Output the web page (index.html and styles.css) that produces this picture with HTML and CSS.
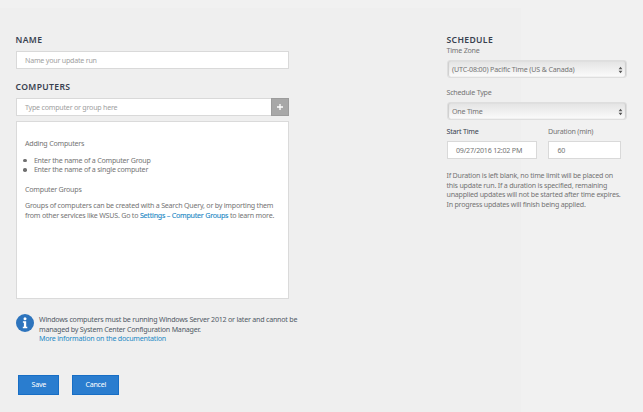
FILE: index.html
```
<!DOCTYPE html>
<html lang="en">
<head>
<meta charset="utf-8">
<title>Update run</title>
<link rel="stylesheet" href="styles.css">
</head>
<body>
<main class="page">
  <section class="main-col">
    <h2 class="heading">NAME</h2>
    <div class="input name-input"><span class="ph">Name your update run</span></div>
    <h2 class="heading computers-heading">COMPUTERS</h2>
    <div class="input-row">
      <div class="input group-input"><span class="ph">Type computer or group here</span></div>
      <button class="add" aria-label="Add"><svg width="8" height="8" viewBox="0 0 8 8"><path d="M4 1v6M1 4h6" stroke="#fff" stroke-width="1.3"/></svg></button>
    </div>
    <div class="panel">
      <p class="sub">Adding Computers</p>
      <ul class="list">
        <li>Enter the name of a Computer Group</li>
        <li>Enter the name of a single computer</li>
      </ul>
      <p class="sub sub-groups">Computer Groups</p>
      <p class="body">Groups of computers can be created with a Search Query, or by importing them<br>from other services like WSUS. Go to <a class="strong-link">Settings – Computer Groups</a> to learn more.</p>
    </div>
    <div class="notice">
      <svg class="info" width="18" height="18" viewBox="0 0 18 18"><circle cx="9" cy="9" r="9" fill="#2d74bd"/><circle cx="9" cy="4.8" r="1.5" fill="#fff"/><path d="M6.9 7.3h3.3v5.4h1.1v1.5H6.8v-1.5h1.1V8.8h-1z" fill="#fff"/></svg>
      <p class="notice-text">Windows computers must be running Windows Server 2012 or later and cannot be<br>managed by System Center Configuration Manager.<br><a>More information on the documentation</a></p>
    </div>
    <div class="actions">
      <button class="btn">Save</button>
      <button class="btn btn-cancel">Cancel</button>
    </div>
  </section>
  <section class="schedule">
    <h2 class="heading">SCHEDULE</h2>
    <p class="label">Time Zone</p>
    <div class="select"><span class="zone">(UTC-08:00) Pacific Time (US &amp; Canada)</span><svg width="5" height="8" viewBox="0 0 5 8"><path d="M2.5 0.7L4.4 3.3H.6zM2.5 7.3L4.4 4.7H.6z" fill="#555"/></svg></div>
    <p class="label type-label">Schedule Type</p>
    <div class="select"><span>One Time</span><svg width="5" height="8" viewBox="0 0 5 8"><path d="M2.5 0.7L4.4 3.3H.6zM2.5 7.3L4.4 4.7H.6z" fill="#555"/></svg></div>
    <div class="time-row">
      <div class="field-start"><p class="label dark">Start Time</p><div class="input"><span>09/27/2016 12:02 PM</span></div></div>
      <div class="field-duration"><p class="label">Duration (min)</p><div class="input"><span>60</span></div></div>
    </div>
    <p class="help">If Duration is left blank, no time limit will be placed on<br>this update run. If a duration is specified, remaining<br>unapplied updates will not be started after time expires.<br>In progress updates will finish being applied.</p>
  </section>
</main>
</body>
</html>
```
FILE: styles.css
```
* { box-sizing: border-box; }
body {
  margin: 0;
  height: 412px;
  overflow: hidden;
  background: linear-gradient(#efefef, #efefef) 0 8px / 521px 404px no-repeat #f1f1f1;
  font: 7.1px/9.5px "Noto Sans", "Open Sans", sans-serif;
  letter-spacing: -0.22px;
  color: #747474;
  white-space: nowrap;
}
p, h2, ul { margin: 0; padding: 0; }
button { padding: 0; border: 0; font: inherit; letter-spacing: inherit; }
a { color: #2489c5; }
.strong-link { -webkit-text-stroke: 0.12px #2489c5; }
.page {
  display: grid;
  grid-template-columns: 273px 180px;
  column-gap: 158px;
  padding: 34px 0 0 15.5px;
}
.heading {
  height: 12px;
  font-size: 8.6px;
  line-height: 12px;
  font-weight: 600;
  letter-spacing: 0.36px;
  color: #384150;
}
.input {
  display: flex;
  align-items: center;
  height: 18px;
  padding: 1px 0 0 8.5px;
  border: 1px solid #d9d9d9;
  background: #fff;
}
.name-input { margin-top: 5px; }
.ph { color: #a0a0a0; }
.computers-heading { margin-top: 12px; }
.input-row { display: flex; margin-top: 5px; }
.group-input { flex: 1; border-right: 0; }
.add {
  display: flex;
  align-items: center;
  justify-content: center;
  width: 18px;
  height: 18px;
  border: 1px solid #9c9c9c;
  background: #a8a8a8;
}
.panel {
  height: 178px;
  margin-top: 5px;
  padding: 17px 0 0 8.5px;
  border: 1px solid #dadada;
  background: #fff;
}
.list { margin-top: 7px; list-style: none; }
.list li { display: flex; align-items: center; height: 9.5px; }
.list li::before {
  content: "";
  width: 3.5px;
  height: 3.5px;
  margin: 0 7.4px 0 -2px;
  border-radius: 50%;
  background: #707070;
}
.sub-groups { margin-top: 10px; }
.body { margin-top: 7px; }
.notice { display: flex; gap: 5.5px; margin-top: 15px; color: #505a66; }
.info { flex: none; }
.notice-text { margin-top: 1px; }
.actions { display: flex; gap: 13px; margin: 31px 0 0 2.8px; }
.btn {
  width: 41px;
  height: 20px;
  border: 1px solid #176ec5;
  background: #2a7dcf;
  color: #fff;
}
.btn-cancel { width: 47px; }
.label { height: 10px; line-height: 9px; }
.select {
  display: flex;
  align-items: center;
  justify-content: space-between;
  height: 18px;
  margin-top: 4px;
  padding: 1px 3px 0 4.5px;
  border: 1px solid #dedede;
  border-radius: 3px;
  background: linear-gradient(#e3e3e3, #fbfbfb);
  box-shadow: inset 1px 0 1px #cecece, inset -1px 0 1px #cecece;
}
.zone { letter-spacing: -0.16px; }
.type-label { margin-top: 10px; }
.time-row { display: flex; gap: 11px; margin-top: 7px; }
.time-row .input { margin-top: 4px; }
.field-start { width: 90.5px; }
.field-duration { width: 73px; }
.dark { color: #384150; }
.help { margin-top: 12px; }
```
